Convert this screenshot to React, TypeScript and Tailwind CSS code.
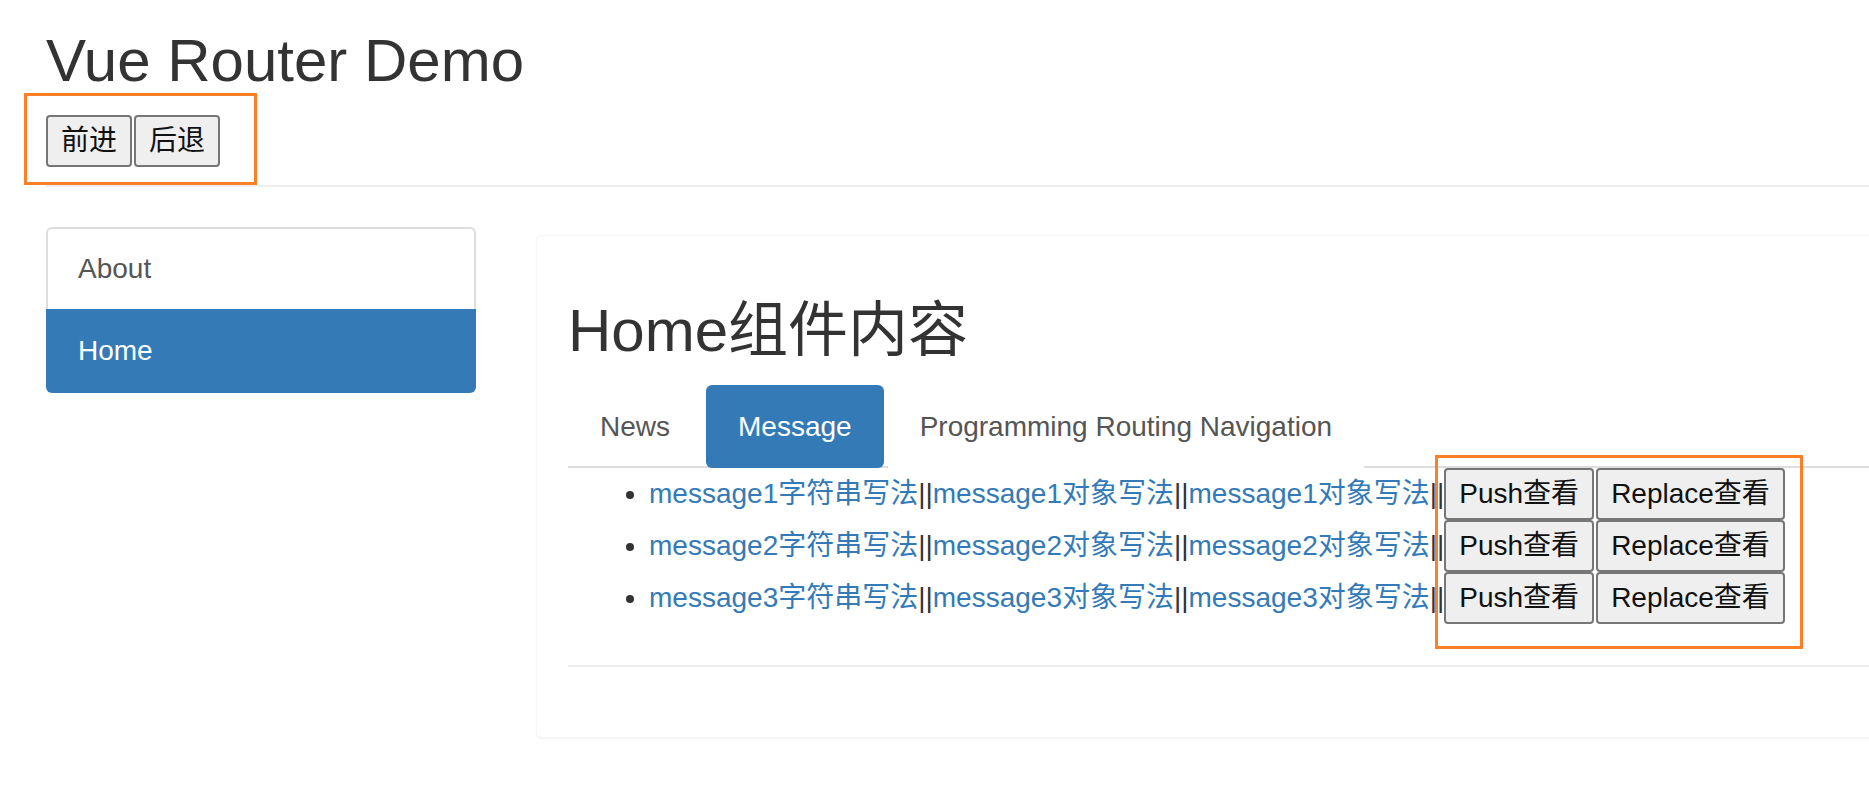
import React from "react";

const rows = [1, 2, 3];

function GrayButton({ children, className = "" }: { children: React.ReactNode; className?: string }) {
  return (
    <button
      type="button"
      className={`inline-block h-[52px] rounded-[4px] border-2 border-[#767676] bg-[#efefef] px-[13px] align-top text-[28px] leading-[48px] text-[#111] ${className}`}
    >
      {children}
    </button>
  );
}

export default function App() {
  return (
    <div className="relative h-[794px] w-[1869px] overflow-hidden bg-white font-['Liberation_Sans','Noto_Sans_CJK_SC',sans-serif] text-[#333]">
      {/* page header */}
      <div className="pl-[46px]">
        <div className="border-b-2 border-[#eee] pt-[28px] pb-[18px]">
          <h1 className="h-[66px] text-[60px] leading-[66px]">Vue Router Demo</h1>
          <div className="mt-[21px] flex gap-[2px]">
            <GrayButton>前进</GrayButton>
            <GrayButton>后退</GrayButton>
          </div>
        </div>
      </div>

      <div className="flex pl-[46px] pt-[40px]">
        {/* side nav */}
        <div className="w-[430px] shrink-0 text-[28px]">
          <a className="flex h-[82px] items-center rounded-t-[6px] border-2 border-b-0 border-[#ddd] bg-white pl-[30px] text-[#555]">
            About
          </a>
          <a className="flex h-[84px] items-center rounded-b-[6px] bg-[#337ab7] pl-[32px] text-white">
            Home
          </a>
        </div>

        {/* panel */}
        <div className="ml-[60px] mt-[8px] h-[503px] w-[1500px] shrink-0 rounded-[6px] border border-[#f5f5f5] bg-white pl-[31px] pt-[62px] shadow-[0_1px_2px_rgba(0,0,0,0.06)]">
          <h3 className="h-[66px] text-[60px] leading-[66px]">Home组件内容</h3>

          <ul className="mt-[21px] flex gap-[4px] border-b-2 border-[#ddd] text-[28px]">
            <li className="-mb-[2px]">
              <a className="flex h-[83px] items-center px-[32px] text-[#555]">News</a>
            </li>
            <li className="-mb-[2px]">
              <a className="flex h-[83px] items-center rounded-[6px] bg-[#337ab7] px-[32px] text-white">Message</a>
            </li>
            <li className="-mb-[2px]">
              <a className="flex h-[83px] items-center bg-white px-[32px] text-[#555]">
                Programming Routing Navigation
              </a>
            </li>
          </ul>

          <ul className="list-disc pl-[81px] text-[28px]">
            {rows.map((n) => (
              <li key={n} className="h-[52px] whitespace-nowrap leading-[52px]">
                <a className="text-[#337ab7]">message{n}字符串写法</a>
                ||
                <a className="text-[#337ab7]">message{n}对象写法</a>
                ||
                <a className="text-[#337ab7]">message{n}对象写法</a>
                ||
                <GrayButton className="mr-[2px]">Push查看</GrayButton>
                <GrayButton>Replace查看</GrayButton>
              </li>
            ))}
          </ul>

          <div className="mt-[41px] h-[2px] bg-[#eee]" />
        </div>
      </div>

      {/* annotation frames */}
      <div className="pointer-events-none absolute left-[24px] top-[93px] h-[92px] w-[233px] border-[3px] border-[#ff7f27]" />
      <div className="pointer-events-none absolute left-[1435px] top-[455px] h-[194px] w-[368px] border-[3px] border-[#ff7f27]" />
    </div>
  );
}
